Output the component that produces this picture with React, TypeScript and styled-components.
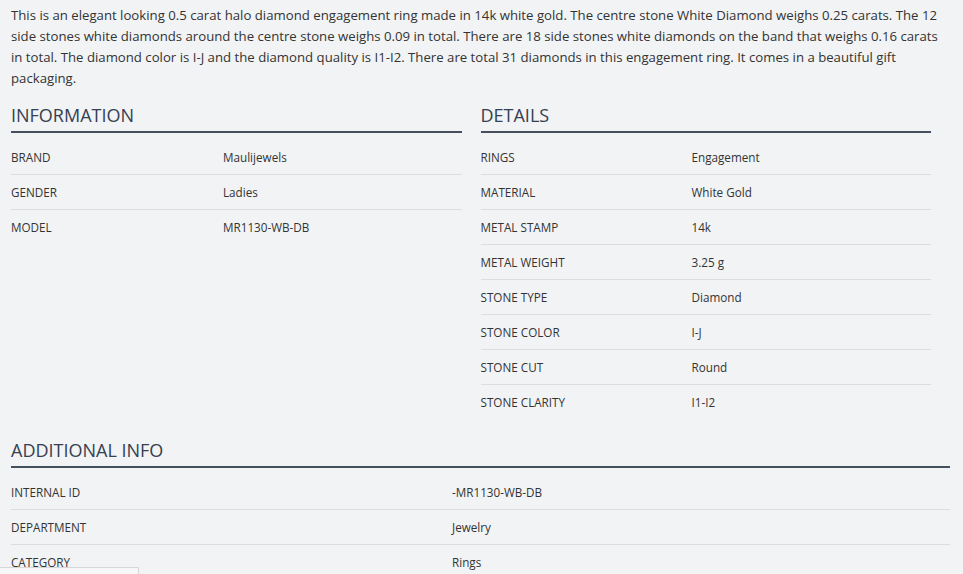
import styled, { createGlobalStyle } from "styled-components";

const GlobalStyle = createGlobalStyle`
  html, body {
    margin: 0;
    padding: 0;
    background: #f2f3f5;
  }
  body {
    font-family: "Open Sans", "Noto Sans", "Liberation Sans", sans-serif;
    color: #333333;
  }
`;

const Page = styled.div`
  padding: 5px 13px 0 11px;
  width: 939px;
`;

const Description = styled.p`
  margin: 0;
  font-size: 13.2px;
  line-height: 21px;
  color: #333333;
`;

const Columns = styled.div`
  display: grid;
  grid-template-columns: 1fr 1fr;
  margin-top: 14px;
`;

const Section = styled.section<{ $gapRight?: boolean }>`
  padding-right: ${(p) => (p.$gapRight ? "19px" : "0")};
`;

const Heading = styled.h2`
  margin: 0 0 6px;
  font-size: 18px;
  font-weight: 400;
  line-height: 24px;
  color: #354051;
  padding-bottom: 4px;
  border-bottom: 2px solid #454f5e;
`;

const Row = styled.div<{ $labelWidth: string }>`
  display: grid;
  grid-template-columns: ${(p) => p.$labelWidth} 1fr;
  box-sizing: border-box;
  height: 35px;
  align-items: center;
  font-size: 11.7px;
  color: #333333;

  & + & {
    border-top: 1px solid #dcdde2;
  }
`;

const Label = styled.span`
  text-transform: uppercase;
`;

const Value = styled.span``;

const Additional = styled.section`
  margin-top: 19px;
`;

// little tab peeking in at the bottom-left corner
const FloatingTab = styled.div`
  position: fixed;
  left: 0;
  bottom: 0;
  width: 138px;
  height: 6px;
  background: #f7f7f8;
  border-top: 1px solid #d6d7db;
  border-right: 1px solid #d6d7db;
`;

const information = [
  ["Brand", "Maulijewels"],
  ["Gender", "Ladies"],
  ["Model", "MR1130-WB-DB"],
];

const details = [
  ["Rings", "Engagement"],
  ["Material", "White Gold"],
  ["Metal Stamp", "14k"],
  ["Metal Weight", "3.25 g"],
  ["Stone Type", "Diamond"],
  ["Stone Color", "I-J"],
  ["Stone Cut", "Round"],
  ["Stone Clarity", "I1-I2"],
];

const additional = [
  ["Internal ID", "-MR1130-WB-DB"],
  ["Department", "Jewelry"],
  ["Category", "Rings"],
];

function App() {
  return (
    <>
      <GlobalStyle />
      <Page>
        <Description>
          This is an elegant looking 0.5 carat halo diamond engagement ring made in 14k white gold. The
          centre stone White Diamond weighs 0.25 carats. The 12 side stones white diamonds around the
          centre stone weighs 0.09 in total. There are 18 side stones white diamonds on the band that
          weighs 0.16 carats in total. The diamond color is I-J and the diamond quality is I1-I2. There
          are total 31 diamonds in this engagement ring. It comes in a beautiful gift packaging.
        </Description>

        <Columns>
          <Section $gapRight>
            <Heading>INFORMATION</Heading>
            {information.map(([label, value]) => (
              <Row key={label} $labelWidth="212px">
                <Label>{label}</Label>
                <Value>{value}</Value>
              </Row>
            ))}
          </Section>
          <Section $gapRight>
            <Heading>DETAILS</Heading>
            {details.map(([label, value]) => (
              <Row key={label} $labelWidth="211px">
                <Label>{label}</Label>
                <Value>{value}</Value>
              </Row>
            ))}
          </Section>
        </Columns>

        <Additional>
          <Heading>ADDITIONAL INFO</Heading>
          {additional.map(([label, value]) => (
            <Row key={label} $labelWidth="441px">
              <Label>{label}</Label>
              <Value>{value}</Value>
            </Row>
          ))}
        </Additional>
      </Page>
      <FloatingTab />
    </>
  );
}

export default App;
